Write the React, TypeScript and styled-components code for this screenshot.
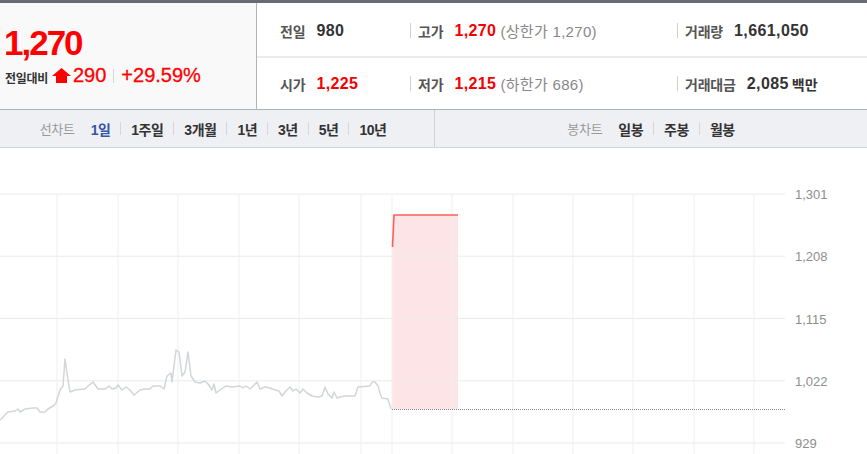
import React from "react";
import styled, { createGlobalStyle } from "styled-components";

const GlobalStyle = createGlobalStyle`
  html, body { margin: 0; padding: 0; background: #fff; }
  body { font-family: "Liberation Sans", "Noto Sans CJK KR", sans-serif; }
  * { box-sizing: border-box; }
`;

const Page = styled.div`
  width: 867px;
  height: 454px;
  overflow: hidden;
  background: #fff;
  display: flex;
  flex-direction: column;
`;

const TopBar = styled.div`
  height: 3px;
  background: #666b74;
`;

const Header = styled.div`
  height: 106px;
  display: grid;
  grid-template-columns: 257px 1fr;
`;

const PricePanel = styled.div`
  background: #f9f9f9;
  border-right: 1px solid #b4b4b4;
  padding: 20px 0 0 4px;
`;

const BigPrice = styled.div`
  font-family: "Liberation Sans", sans-serif;
  font-weight: 700;
  font-size: 35px;
  line-height: 40px;
  letter-spacing: -2px;
  color: #f00;
`;

const ChangeRow = styled.div`
  display: flex;
  align-items: center;
  height: 24px;
  padding-left: 1px;
`;

const ChangeLabel = styled.span`
  font-family: "Noto Sans CJK KR", sans-serif;
  font-size: 12px;
  font-weight: 700;
  letter-spacing: -0.3px;
  color: #333;
  margin-right: 4px;
  margin-top: 4px;
`;

const ChangeValue = styled.span`
  font-family: "Liberation Sans", sans-serif;
  font-size: 20px;
  color: #f00;
  -webkit-text-stroke: 0.3px #f00;
`;

const ChangeSep = styled.span`
  width: 1px;
  height: 14px;
  background: #d6d6d6;
  margin: 2px 7px 0 7px;
`;

const StatsPanel = styled.div`
  display: flex;
  flex-direction: column;
`;

const StatsRow = styled.div<{ $divider?: boolean }>`
  flex: 1;
  display: flex;
  align-items: center;
  padding-top: ${(p) => (p.$divider ? "2px" : "0")};
  border-bottom: ${(p) => (p.$divider ? "2px solid #ebebeb" : "none")};
`;

const Cell = styled.div<{ $w?: number; $first?: boolean }>`
  display: flex;
  align-items: center;
  width: ${(p) => (p.$w ? `${p.$w}px` : "auto")};
  flex: ${(p) => (p.$w ? "none" : "1")};
  padding-left: ${(p) => (p.$first ? "23px" : "0")};
  &::before {
    content: "";
    display: ${(p) => (p.$first ? "none" : "block")};
    width: 1px;
    height: 15px;
    background: #d0d0d0;
    margin-right: 7px;
  }
`;

const Label = styled.span`
  font-family: "Noto Sans CJK KR", sans-serif;
  font-size: 14px;
  font-weight: 700;
  letter-spacing: -0.2px;
  color: #555;
  margin-right: 11px;
`;

const Value = styled.span<{ $red?: boolean }>`
  font-family: "Liberation Sans", "Noto Sans CJK KR", sans-serif;
  font-size: 16px;
  font-weight: 700;
  letter-spacing: 0.4px;
  color: ${(p) => (p.$red ? "#f50000" : "#333")};
`;

const Unit = styled.span`
  font-family: "Noto Sans CJK KR", sans-serif;
  font-size: 14px;
  font-weight: 700;
  color: #333;
  margin-left: 3px;
  letter-spacing: 0px;
`;

const Note = styled.span`
  font-family: "Liberation Sans", "Noto Sans CJK KR", sans-serif;
  font-size: 15px;
  color: #888;
  margin-left: 4px;
  letter-spacing: 0.3px;
`;

const TabBar = styled.div`
  height: 39px;
  border-top: 1px solid #aeb1b6;
  border-bottom: 1px solid #d3d5d9;
  background: #eff0f4;
  display: grid;
  grid-template-columns: 435px 1fr;
`;

const TabGroup = styled.div<{ $divider?: boolean }>`
  display: flex;
  align-items: center;
  justify-content: center;
  border-right: ${(p) => (p.$divider ? "1px solid #cfd1d5" : "none")};
  padding-right: ${(p) => (p.$divider ? "8px" : "0")};
`;

const TabTitle = styled.span`
  font-family: "Noto Sans CJK KR", sans-serif;
  font-size: 13px;
  color: #9a9a9a;
  letter-spacing: -0.3px;
  margin-right: 16px;
`;

const Tab = styled.span<{ $active?: boolean }>`
  font-family: "Liberation Sans", "Noto Sans CJK KR", sans-serif;
  font-size: 14px;
  font-weight: 700;
  letter-spacing: -0.5px;
  color: ${(p) => (p.$active ? "#3555a6" : "#333")};
`;

const TabSep = styled.span`
  width: 1px;
  height: 13px;
  background: #d4d6da;
  margin: 0 10px 0 10px;
`;

const ChartWrap = styled.div`
  flex: 1;
  position: relative;
`;

const ChartSvg = styled.svg`
  display: block;
`;

const AxisLabel = styled.text`
  font-family: "Liberation Sans", sans-serif;
  font-size: 13px;
  fill: #8e8e8e;
`;

const OFF = 148;
const H_LINES = [194, 256.25, 318.5, 380.75, 443];
const Y_LABELS = ["1,301", "1,208", "1,115", "1,022", "929"];
const V_LINES = [57, 118, 178, 239, 299, 361, 392, 452, 513, 573, 633, 694, 754];

const PTS: [number, number][] = [
  [0, 420], [3, 417], [8, 412], [15, 411], [18, 409], [20, 412], [25, 409], [33, 408], [37, 408],
  [40, 412], [45, 412], [48, 409], [53, 406], [56, 403], [60, 390], [63, 386], [65, 359], [68, 380],
  [70, 392], [75, 390], [85, 389], [88, 386], [93, 382], [98, 389], [105, 389], [109, 386], [112, 389],
  [116, 388], [118, 385], [122, 390], [126, 387], [130, 390], [134, 395], [140, 390], [145, 389],
  [150, 389], [153, 386], [160, 386], [164, 389], [167, 376], [171, 373], [172, 382], [176, 350],
  [179, 352], [182, 376], [185, 372], [188, 352], [191, 376], [195, 382], [200, 383], [205, 381],
  [208, 384], [212, 390], [214, 384], [216, 393], [220, 390], [226, 386], [232, 387], [240, 386],
  [243, 388], [246, 386], [250, 389], [257, 382], [260, 389], [265, 387], [270, 388], [275, 390],
  [279, 391], [282, 396], [285, 392], [290, 387], [293, 391], [296, 389], [300, 393], [303, 389],
  [307, 393], [312, 396], [318, 397], [322, 396], [325, 387], [328, 394], [332, 398], [334, 392],
  [337, 398], [340, 397], [345, 396], [355, 396], [358, 387], [370, 386], [372, 382], [375, 382],
  [378, 386], [380, 393], [382, 398], [388, 399], [391, 409],
];

const UpArrow = () => (
  <svg width="19" height="15" viewBox="0 0 19 15" style={{ marginRight: 2 }}>
    <polygon points="9.5,0 19,8 15,8 15,15 4,15 4,8 0,8" fill="#f00" />
  </svg>
);

const Chart = () => {
  const line = PTS.map(([x, y], i) => `${i ? "L" : "M"}${x},${y - OFF}`).join(" ");
  return (
    <ChartSvg width={867} height={306} viewBox="0 0 867 306">
      <rect x={392} y={215 - OFF} width={66} height={409 - 215} fill="#fde5e7" />
      {H_LINES.map((y) => (
        <line key={y} x1={0} x2={785} y1={y - OFF} y2={y - OFF} stroke="#ebebeb" strokeWidth={1} />
      ))}
      {V_LINES.map((x) => (
        <line key={x} x1={x} x2={x} y1={194 - OFF} y2={306} stroke="#efefef" strokeWidth={1} />
      ))}
      {H_LINES.map((y, i) => (
        <AxisLabel key={Y_LABELS[i]} x={795} y={y - OFF + 5}>
          {Y_LABELS[i]}
        </AxisLabel>
      ))}
      <line x1={392} x2={785} y1={409.5 - OFF} y2={409.5 - OFF} stroke="#8a8a8a" strokeWidth={1} strokeDasharray="1 1" />
      <path d={line} fill="none" stroke="#d2d5da" strokeWidth={1.5} strokeLinejoin="round" />
      <path
        d={`M392.5,${247 - OFF} L394,${215 - OFF} L458,${215 - OFF}`}
        fill="none"
        stroke="#ff5f5f"
        strokeWidth={1.6}
      />
    </ChartSvg>
  );
};

export default function App() {
  return (
    <>
      <GlobalStyle />
      <Page>
        <TopBar />
        <Header>
          <PricePanel>
            <BigPrice>1,270</BigPrice>
            <ChangeRow>
              <ChangeLabel>전일대비</ChangeLabel>
              <UpArrow />
              <ChangeValue>290</ChangeValue>
              <ChangeSep />
              <ChangeValue>+29.59%</ChangeValue>
            </ChangeRow>
          </PricePanel>
          <StatsPanel>
            <StatsRow $divider>
              <Cell $w={153} $first>
                <Label>전일</Label>
                <Value>980</Value>
              </Cell>
              <Cell $w={267}>
                <Label>고가</Label>
                <Value $red>1,270</Value>
                <Note>(상한가 1,270)</Note>
              </Cell>
              <Cell>
                <Label>거래량</Label>
                <Value>1,661,050</Value>
              </Cell>
            </StatsRow>
            <StatsRow>
              <Cell $w={153} $first>
                <Label>시가</Label>
                <Value $red>1,225</Value>
              </Cell>
              <Cell $w={267}>
                <Label>저가</Label>
                <Value $red>1,215</Value>
                <Note>(하한가 686)</Note>
              </Cell>
              <Cell>
                <Label>거래대금</Label>
                <Value>2,085</Value>
                <Unit>백만</Unit>
              </Cell>
            </StatsRow>
          </StatsPanel>
        </Header>
        <TabBar>
          <TabGroup $divider>
            <TabTitle>선차트</TabTitle>
            <Tab $active>1일</Tab>
            <TabSep />
            <Tab>1주일</Tab>
            <TabSep />
            <Tab>3개월</Tab>
            <TabSep />
            <Tab>1년</Tab>
            <TabSep />
            <Tab>3년</Tab>
            <TabSep />
            <Tab>5년</Tab>
            <TabSep />
            <Tab>10년</Tab>
          </TabGroup>
          <TabGroup>
            <TabTitle>봉차트</TabTitle>
            <Tab>일봉</Tab>
            <TabSep />
            <Tab>주봉</Tab>
            <TabSep />
            <Tab>월봉</Tab>
          </TabGroup>
        </TabBar>
        <ChartWrap>
          <Chart />
        </ChartWrap>
      </Page>
    </>
  );
}
